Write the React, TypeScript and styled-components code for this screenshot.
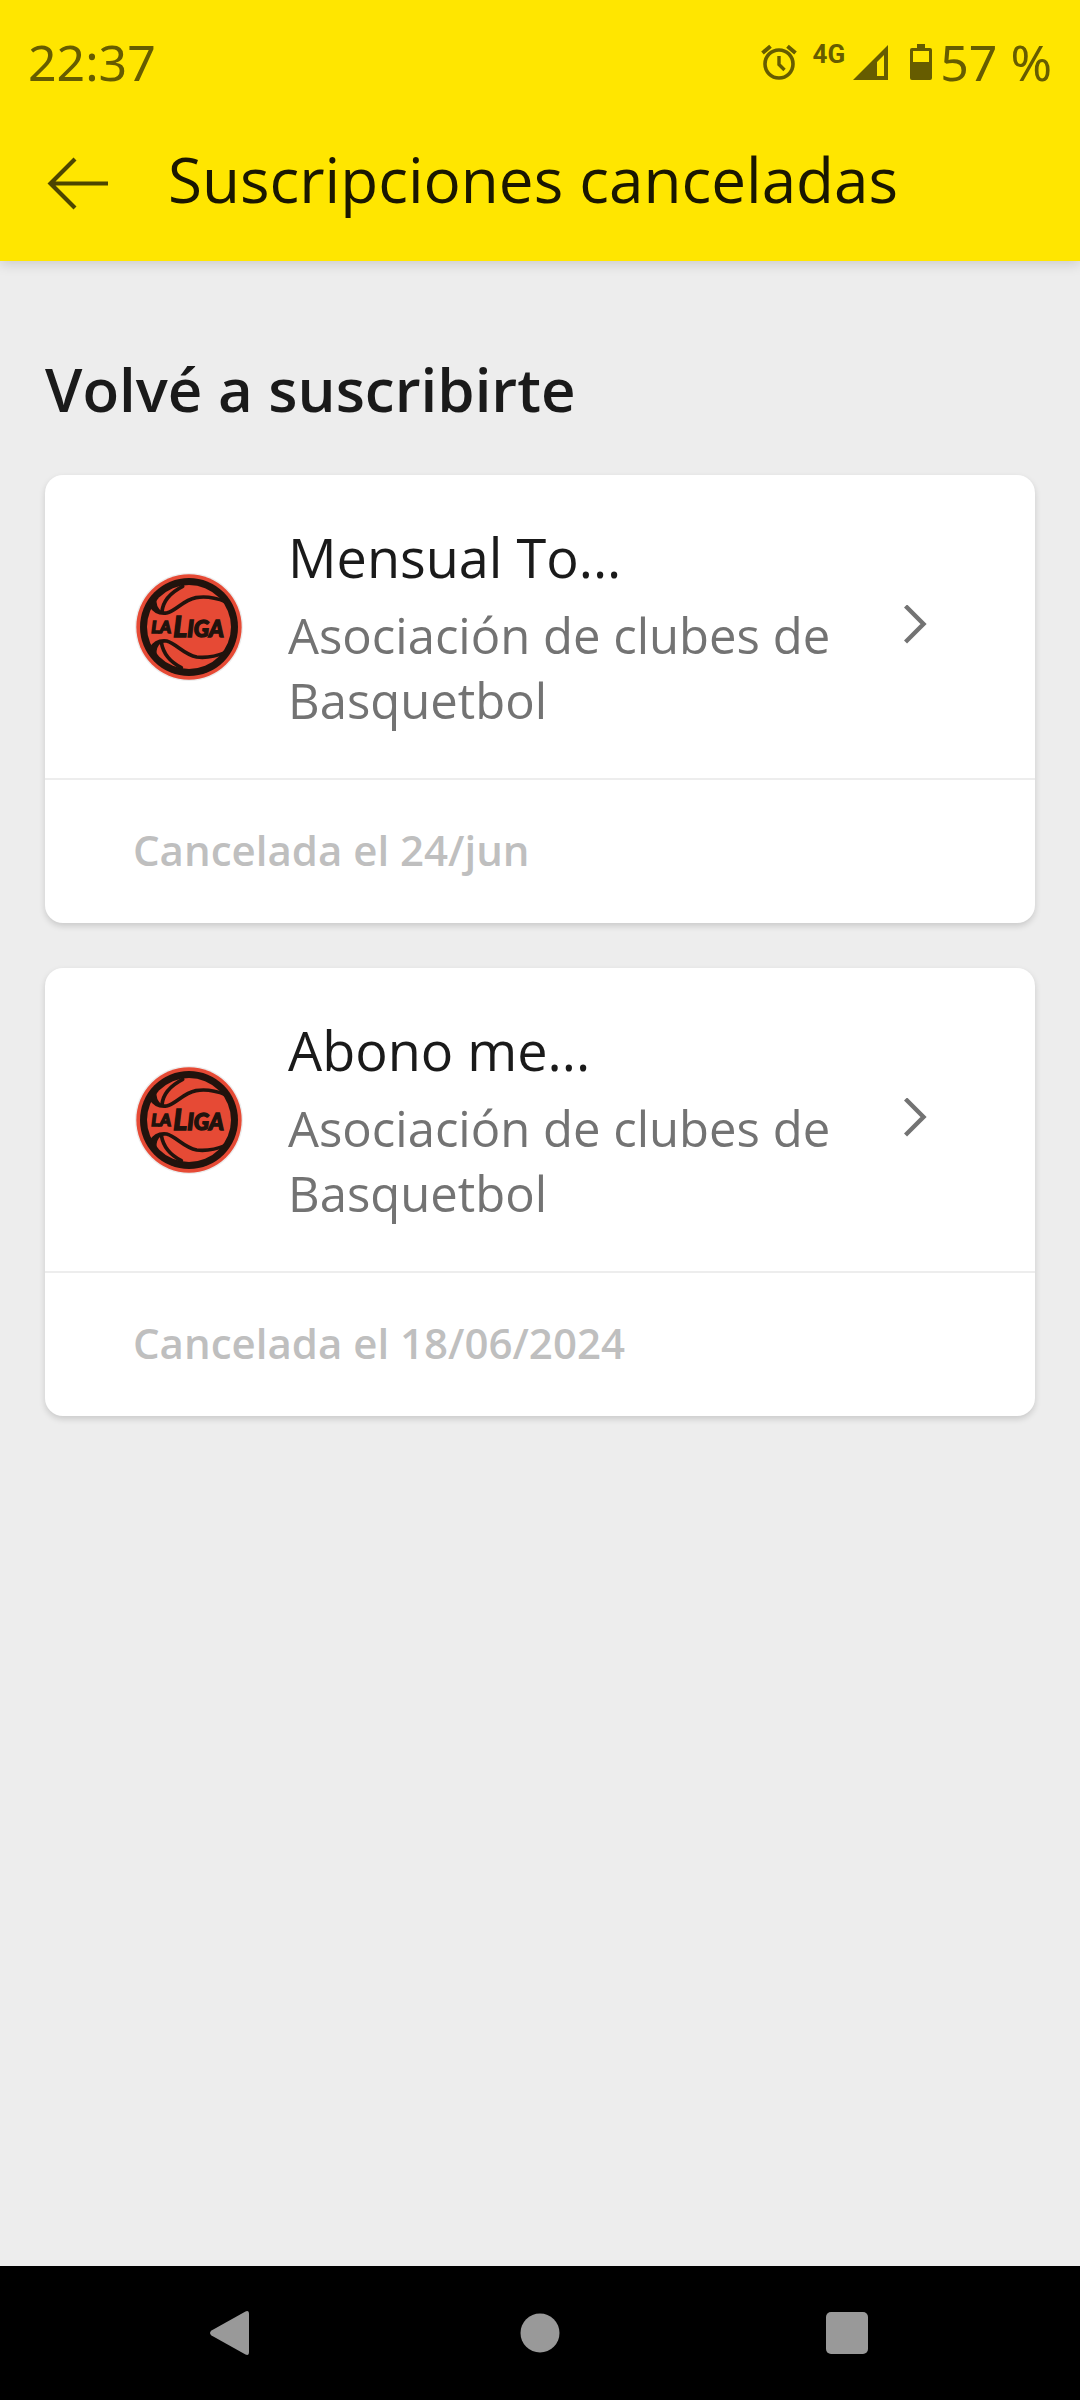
import React from "react";
import styled, { createGlobalStyle } from "styled-components";

const GlobalStyle = createGlobalStyle`
  *, *::before, *::after { box-sizing: border-box; }
  body {
    margin: 0;
    background: #ededed;
    font-family: "Open Sans", "Noto Sans", sans-serif;
    color: #1a1a1a;
  }
  h1, h2, h3, p, ul { margin: 0; padding: 0; font-weight: 400; }
`;

const Screen = styled.div`
  display: flex;
  flex-direction: column;
  min-height: 100vh;
`;

const Header = styled.header`
  background: #ffe600;
  box-shadow: 0 3px 12px rgba(0, 0, 0, 0.15);
`;

const StatusBar = styled.div`
  display: flex;
  align-items: center;
  justify-content: space-between;
  height: 96px;
  padding: 28px 28px 0;
  color: #665c00;
  font-family: "Noto Sans", "Open Sans", sans-serif;
  font-size: 50px;
  line-height: 68px;
`;

const StatusIcons = styled.div`
  display: flex;
  align-items: center;
`;

const Indicators = styled.div`
  display: flex;
  height: 36px;
  margin-right: 8px;
  svg { display: block; }
`;

const Network = styled.span`
  margin: 0 7px 0 16px;
  font-family: Roboto, sans-serif;
  font-size: 26px;
  font-weight: 700;
  line-height: 20px;
`;

const Signal = styled.svg`
  margin-right: 22px;
`;

const AppBar = styled.div`
  display: flex;
  align-items: center;
  gap: 57px;
  height: 165px;
  padding: 0 45px;
  color: #1a1700;
`;

const IconButton = styled.button`
  display: flex;
  padding: 0;
  border: 0;
  background: none;
  color: #4d4500;
  cursor: pointer;
`;

const Title = styled.h1`
  font-size: 62px;
  line-height: 80px;
`;

const Main = styled.main`
  flex: 1;
  padding: 88px 45px 45px;
`;

const SectionTitle = styled.h2`
  margin-bottom: 46px;
  font-size: 60px;
  font-weight: 600;
  line-height: 80px;
`;

const CardList = styled.ul`
  display: flex;
  flex-direction: column;
  gap: 45px;
  list-style: none;
`;

const Card = styled.li`
  border-radius: 18px;
  background: #fff;
  box-shadow: 0 3px 6px rgba(0, 0, 0, 0.15);
`;

const CardLink = styled.a`
  display: flex;
  align-items: center;
  gap: 45px;
  padding: 46px 90px 45px;
  border-bottom: 2px solid #ededed;
  color: inherit;
  text-decoration: none;
  svg { display: block; flex: none; }
`;

const CardText = styled.div`
  flex: 1;
  min-width: 0;
`;

const CardTitle = styled.h3`
  margin-bottom: 10px;
  font-size: 54px;
  line-height: 72px;
`;

const CardSubtitle = styled.p`
  color: #737373;
  font-size: 49px;
  line-height: 65px;
`;

const CardFooter = styled.p`
  padding: 41px 88px 45px;
  color: #bfbfbf;
  font-size: 42px;
  font-weight: 600;
  line-height: 57px;
`;

const NavBar = styled.nav`
  display: grid;
  grid-template-columns: repeat(3, 1fr);
  height: 134px;
  padding: 0 80px;
  background: #000;
`;

const NavButton = styled.button`
  display: flex;
  align-items: center;
  justify-content: center;
  padding: 0;
  border: 0;
  background: none;
  color: #999;
  cursor: pointer;
`;

const AlarmIcon = () => (
  <svg width="36" height="36" viewBox="0 0 36 36" fill="none" stroke="currentColor" aria-hidden="true">
    <circle cx="18" cy="20" r="14" strokeWidth="3.6" />
    <path d="M1.5 9 L9.5 2.3 M26.5 2.3 L34.5 9" strokeWidth="4" />
    <path d="M18 12 V20.5 L23.5 26" strokeWidth="3.4" />
  </svg>
);

const SignalIcon = () => (
  <Signal width="36" height="36" viewBox="0 0 36 36" fill="currentColor" aria-hidden="true">
    <path fillRule="evenodd" d="M36 1 V36 H1 Z M32 11 L25 18 V32 H32 Z" />
  </Signal>
);

const BatteryIcon = () => (
  <svg width="22" height="36" viewBox="0 0 22 36" fill="currentColor" aria-hidden="true">
    <path
      fillRule="evenodd"
      d="M7 0 H15 V4 H20 Q22 4 22 6 V34 Q22 36 20 36 H2 Q0 36 0 34 V6 Q0 4 2 4 H7 Z M3 7 V18 H19 V7 Z"
    />
  </svg>
);

const BackArrow = () => (
  <svg width="66" height="65" viewBox="0 0 66 65" fill="none" stroke="currentColor" strokeWidth="4.2" aria-hidden="true">
    <path d="M30 13 L5.5 37.5 L30 62 M5.5 37.5 H63" />
  </svg>
);

const Chevron = () => (
  <svg width="41" height="44" viewBox="0 0 41 44" fill="none" stroke="#737373" strokeWidth="4.4" aria-hidden="true">
    <path d="M1.5 1 L19.5 19 L1.5 37" />
  </svg>
);

const LeagueLogo = () => (
  <svg width="108" height="108" viewBox="45 36 324 324" role="img" aria-label="La Liga">
    <circle cx="207" cy="198" r="162" fill="#ececec" />
    <circle cx="207" cy="198" r="158" fill="#e64a35" />
    <circle cx="207" cy="198" r="147" fill="#21130d" />
    <circle cx="207" cy="198" r="126" fill="#e64a35" />
    <g fill="none" stroke="#21130d" strokeWidth="11" strokeLinecap="round">
      <path d="M92 132 Q108 160 140 156 C168 150 188 118 228 110 Q268 103 318 122" />
      <path d="M126 152 Q130 106 188 76" />
      <path d="M92 264 Q108 236 140 240 C170 248 190 280 230 288 Q270 293 318 274" />
      <path d="M124 244 Q132 294 184 320" />
    </g>
    <path
      fill="#21130d"
      d="M92 128 L110 112 Q106 138 126 152 Q104 158 92 128 Z M92 268 L110 284 Q106 258 126 244 Q104 238 92 268 Z"
    />
    <g
      fill="#21130d"
      stroke="#21130d"
      strokeWidth="4"
      fontFamily="Lato, sans-serif"
      fontWeight="900"
      fontStyle="italic"
    >
      <text x="94" y="217" fontSize="52">LA</text>
      <text x="160" y="228" fontSize="86">L</text>
      <text x="202" y="227" fontSize="68">IGA</text>
    </g>
  </svg>
);

const subscriptions = [
  { title: "Mensual To...", vendor: "Asociación de clubes de Basquetbol", status: "Cancelada el 24/jun" },
  { title: "Abono me...", vendor: "Asociación de clubes de Basquetbol", status: "Cancelada el 18/06/2024" },
];

export default function App() {
  return (
    <Screen>
      <GlobalStyle />
      <Header>
        <StatusBar>
          <span>22:37</span>
          <StatusIcons>
            <Indicators>
              <AlarmIcon />
              <Network>4G</Network>
              <SignalIcon />
              <BatteryIcon />
            </Indicators>
            <span>57 %</span>
          </StatusIcons>
        </StatusBar>
        <AppBar>
          <IconButton type="button" aria-label="Volver">
            <BackArrow />
          </IconButton>
          <Title>Suscripciones canceladas</Title>
        </AppBar>
      </Header>
      <Main>
        <SectionTitle>Volvé a suscribirte</SectionTitle>
        <CardList>
          {subscriptions.map((item) => (
            <Card key={item.title}>
              <CardLink href="#">
                <LeagueLogo />
                <CardText>
                  <CardTitle>{item.title}</CardTitle>
                  <CardSubtitle>{item.vendor}</CardSubtitle>
                </CardText>
                <Chevron />
              </CardLink>
              <CardFooter>{item.status}</CardFooter>
            </Card>
          ))}
        </CardList>
      </Main>
      <NavBar aria-label="Sistema">
        <NavButton type="button" aria-label="Atrás">
          <svg width="46" height="46" viewBox="0 0 46 46" fill="currentColor">
            <path d="M35.5 1.5 Q39 0 39 4 V42 Q39 46 35.5 44.5 L1.5 25.5 Q-1.5 23 1.5 20.5 Z" />
          </svg>
        </NavButton>
        <NavButton type="button" aria-label="Inicio">
          <svg width="40" height="40" viewBox="0 0 40 40" fill="currentColor">
            <circle cx="20" cy="20" r="19.5" />
          </svg>
        </NavButton>
        <NavButton type="button" aria-label="Recientes">
          <svg width="42" height="42" viewBox="0 0 42 42" fill="currentColor">
            <rect width="42" height="42" rx="5" />
          </svg>
        </NavButton>
      </NavBar>
    </Screen>
  );
}
